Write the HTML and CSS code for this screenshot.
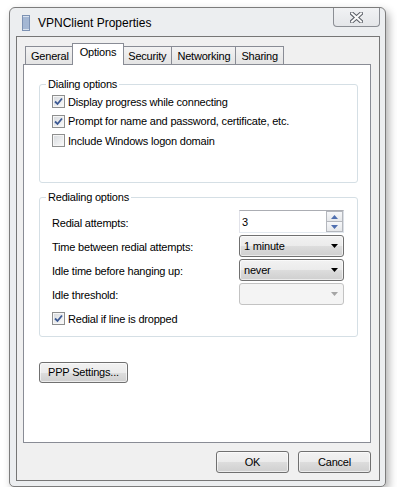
FILE: index.html
```html
<!DOCTYPE html>
<html lang="en">
<head>
  <meta charset="UTF-8" />
  <title>VPNClient Properties</title>
  <link rel="stylesheet" href="styles.css">
</head>
<body>
  <div class="window">
    <div class="titlebar">
      <svg class="app-icon" width="8" height="16" viewBox="0 0 8 16">
        <rect x="0.5" y="0.5" width="7" height="15" fill="#d9e3ef" stroke="#7d92b3"/>
        <path d="M1 3h6M1 5h6M1 7h6M1 9h6M1 11h6M1 13h6" stroke="#6f8bb8" stroke-width="1"/>
      </svg>
      <span class="title">VPNClient Properties</span>
      <div class="close-btn">
        <svg width="13" height="11" viewBox="0 0 13 11">
          <path d="M2 1.5L11 9.5M11 1.5L2 9.5" stroke="#5a5e66" stroke-width="4" stroke-linecap="square"/>
          <path d="M2 1.5L11 9.5M11 1.5L2 9.5" stroke="#fafafa" stroke-width="2" stroke-linecap="square"/>
        </svg>
      </div>
    </div>

    <div class="client">
      <div class="tabs">
        <div class="tab">General</div>
        <div class="tab selected">Options</div>
        <div class="tab">Security</div>
        <div class="tab">Networking</div>
        <div class="tab">Sharing</div>
      </div>

      <div class="tab-panel">
        <fieldset class="group dialing">
          <legend>Dialing options</legend>
          <div class="check-row"><span class="box checked"><svg width="9" height="9" viewBox="0 0 9 9"><path d="M1 4.5L3.5 7L8 1.5" fill="none" stroke="#3d5a94" stroke-width="1.8"/></svg></span>Display progress while connecting</div>
          <div class="check-row"><span class="box checked"><svg width="9" height="9" viewBox="0 0 9 9"><path d="M1 4.5L3.5 7L8 1.5" fill="none" stroke="#3d5a94" stroke-width="1.8"/></svg></span>Prompt for name and password, certificate, etc.</div>
          <div class="check-row"><span class="box"></span>Include Windows logon domain</div>
        </fieldset>

        <fieldset class="group redialing">
          <legend>Redialing options</legend>
          <div class="field-row">
            <span>Redial attempts:</span>
            <div class="spin">
              <span class="spin-value">3</span>
              <div class="spin-buttons">
                <div class="spin-btn"><svg width="7" height="4" viewBox="0 0 7 4"><path d="M0 4L3.5 0L7 4z" fill="#4f6fb0"/></svg></div>
                <div class="spin-btn"><svg width="7" height="4" viewBox="0 0 7 4"><path d="M0 0L3.5 4L7 0z" fill="#4f6fb0"/></svg></div>
              </div>
            </div>
          </div>
          <div class="field-row">
            <span>Time between redial attempts:</span>
            <div class="combo"><span>1 minute</span><svg width="7" height="4" viewBox="0 0 7 4"><path d="M0 0L3.5 4L7 0z" fill="#000"/></svg></div>
          </div>
          <div class="field-row">
            <span>Idle time before hanging up:</span>
            <div class="combo"><span>never</span><svg width="7" height="4" viewBox="0 0 7 4"><path d="M0 0L3.5 4L7 0z" fill="#000"/></svg></div>
          </div>
          <div class="field-row">
            <span>Idle threshold:</span>
            <div class="combo disabled"><span></span><svg width="7" height="4" viewBox="0 0 7 4"><path d="M0 0L3.5 4L7 0z" fill="#a5a5a5"/></svg></div>
          </div>
          <div class="check-row last"><span class="box checked"><svg width="9" height="9" viewBox="0 0 9 9"><path d="M1 4.5L3.5 7L8 1.5" fill="none" stroke="#3d5a94" stroke-width="1.8"/></svg></span>Redial if line is dropped</div>
        </fieldset>

        <button class="btn ppp">PPP Settings...</button>
      </div>

      <div class="dialog-buttons">
        <button class="btn">OK</button>
        <button class="btn">Cancel</button>
      </div>
    </div>
  </div>
</body>
</html>
```

FILE: styles.css
```css
body {
  margin: 0;
  background: #fff;
  font-family: "Liberation Sans", Arial, sans-serif;
  font-size: 11px;
  letter-spacing: -0.2px;
  color: #000;
}
.window {
  margin: 7px 0 0 9px;
  width: 375px;
  height: 478px;
  border: 1px solid #7c7c7c;
  border-radius: 6px 6px 5px 5px;
  background: #eceef0;
  box-shadow: 3px 4px 8px rgba(0,0,0,0.3);
}
.titlebar {
  height: 28px;
  display: flex;
  align-items: center;
  padding-left: 12px;
  padding-right: 5px;
}
.app-icon {
  margin-top: 1px;
}
.title {
  margin-left: 8px;
  font-size: 12px;
  letter-spacing: 0;
  margin-top: 1px;
}
.close-btn {
  margin-left: auto;
  align-self: flex-start;
  width: 45px;
  height: 18px;
  border: 1px solid #8b8e94;
  border-top: none;
  border-radius: 0 0 4px 4px;
  background: linear-gradient(#f1f2f4, #e4e6e9);
  display: flex;
  align-items: center;
  justify-content: center;
}
.client {
  margin: 0 5px 5px 6px;
  border: 1px solid #767676;
  background: #f0f0f0;
  padding: 7px 0 0 6px;
  box-sizing: border-box;
  height: 445px;
}
.tabs {
  display: flex;
  align-items: flex-end;
  margin-left: 2px;
  height: 20px;
  position: relative;
  z-index: 1;
}
.tab {
  height: 17px;
  padding: 0 5px;
  border: 1px solid #898c95;
  border-bottom: none;
  background: linear-gradient(#f3f3f3, #e4e4e4);
  line-height: 18px;
  margin-right: -1px;
}
.tab.selected {
  height: 21px;
  margin: 0 -2px 0 -2px;
  padding: 0 7px;
  background: #fff;
  line-height: 17px;
  position: relative;
  z-index: 1;
  margin-bottom: -1px;
}
.tab-panel {
  width: 348px;
  height: 379px;
  box-sizing: border-box;
  border: 1px solid #898c95;
  background: #fff;
  padding: 13px 0 0 15px;
}
.group {
  margin: 0;
  width: 319px;
  box-sizing: border-box;
  border: 1px solid #d5dfe5;
  border-radius: 3px;
  padding: 1px 13px 0 12px;
  min-inline-size: 0;
}
.group legend {
  padding: 0 2px;
  margin-left: -6px;
  line-height: 13px;
}
.dialing {
  padding-bottom: 31px;
}
.redialing {
  margin-top: 8px;
  padding-top: 7px;
  padding-bottom: 5px;
}
.check-row {
  display: flex;
  align-items: center;
  height: 19.5px;
}
.check-row.last {
  height: 24px;
  margin-top: 2px;
}
.box {
  width: 13px;
  height: 13px;
  box-sizing: border-box;
  border: 1px solid #8e8f8f;
  background: linear-gradient(135deg, #d6d9dd, #fbfbfb);
  box-shadow: inset 0 0 0 1px #f6f6f6;
  margin-right: 3px;
  display: flex;
  align-items: center;
  justify-content: center;
}
.field-row {
  display: flex;
  justify-content: space-between;
  align-items: center;
  height: 22px;
  margin-bottom: 2px;
}
.field-row span {
  padding-top: 2px;
}
.spin {
  width: 105px;
  height: 23px;
  box-sizing: border-box;
  border: 1px solid #abadb3;
  border-color: #abadb3 #dbdfe6 #e3e9ef #e2e3ea;
  background: #fff;
  display: flex;
  align-items: center;
  padding-left: 2px;
}
.spin-value {
  flex: 1;
  padding-top: 0 !important;
}
.spin-buttons {
  display: flex;
  flex-direction: column;
  width: 17px;
  height: 21px;
}
.spin-btn {
  flex: 1;
  border: 1px solid #b4b7bd;
  background: linear-gradient(#f6f7f9, #e6e8eb);
  display: flex;
  align-items: center;
  justify-content: center;
}
.spin-btn + .spin-btn {
  border-top: none;
}
.combo {
  width: 105px;
  height: 22px;
  box-sizing: border-box;
  border: 1px solid #707070;
  border-radius: 3px;
  background: linear-gradient(#f2f2f2 0%, #ebebeb 50%, #dddddd 51%, #cfcfcf 100%);
  box-shadow: inset 0 0 0 1px rgba(255,255,255,0.6);
  display: flex;
  align-items: center;
  justify-content: space-between;
  padding: 0 5px 0 4px;
}
.combo span {
  padding-top: 1px !important;
}
.combo.disabled {
  border-color: #c3c3c3;
  background: #f4f4f4;
  box-shadow: none;
}
.btn {
  font-family: "Liberation Sans", Arial, sans-serif;
  font-size: 11px;
  letter-spacing: -0.2px;
  color: #000;
  height: 22px;
  border: 1px solid #707070;
  border-radius: 3px;
  background: linear-gradient(#f2f2f2 0%, #ebebeb 50%, #dddddd 51%, #cfcfcf 100%);
  box-shadow: inset 0 0 0 1px rgba(255,255,255,0.6);
  padding: 0;
}
.ppp {
  margin-top: 25px;
  width: 89px;
  height: 21px;
}
.dialog-buttons {
  display: flex;
  justify-content: flex-end;
  gap: 9px;
  width: 348px;
  margin-top: 8px;
}
.dialog-buttons .btn {
  width: 73px;
}
```
